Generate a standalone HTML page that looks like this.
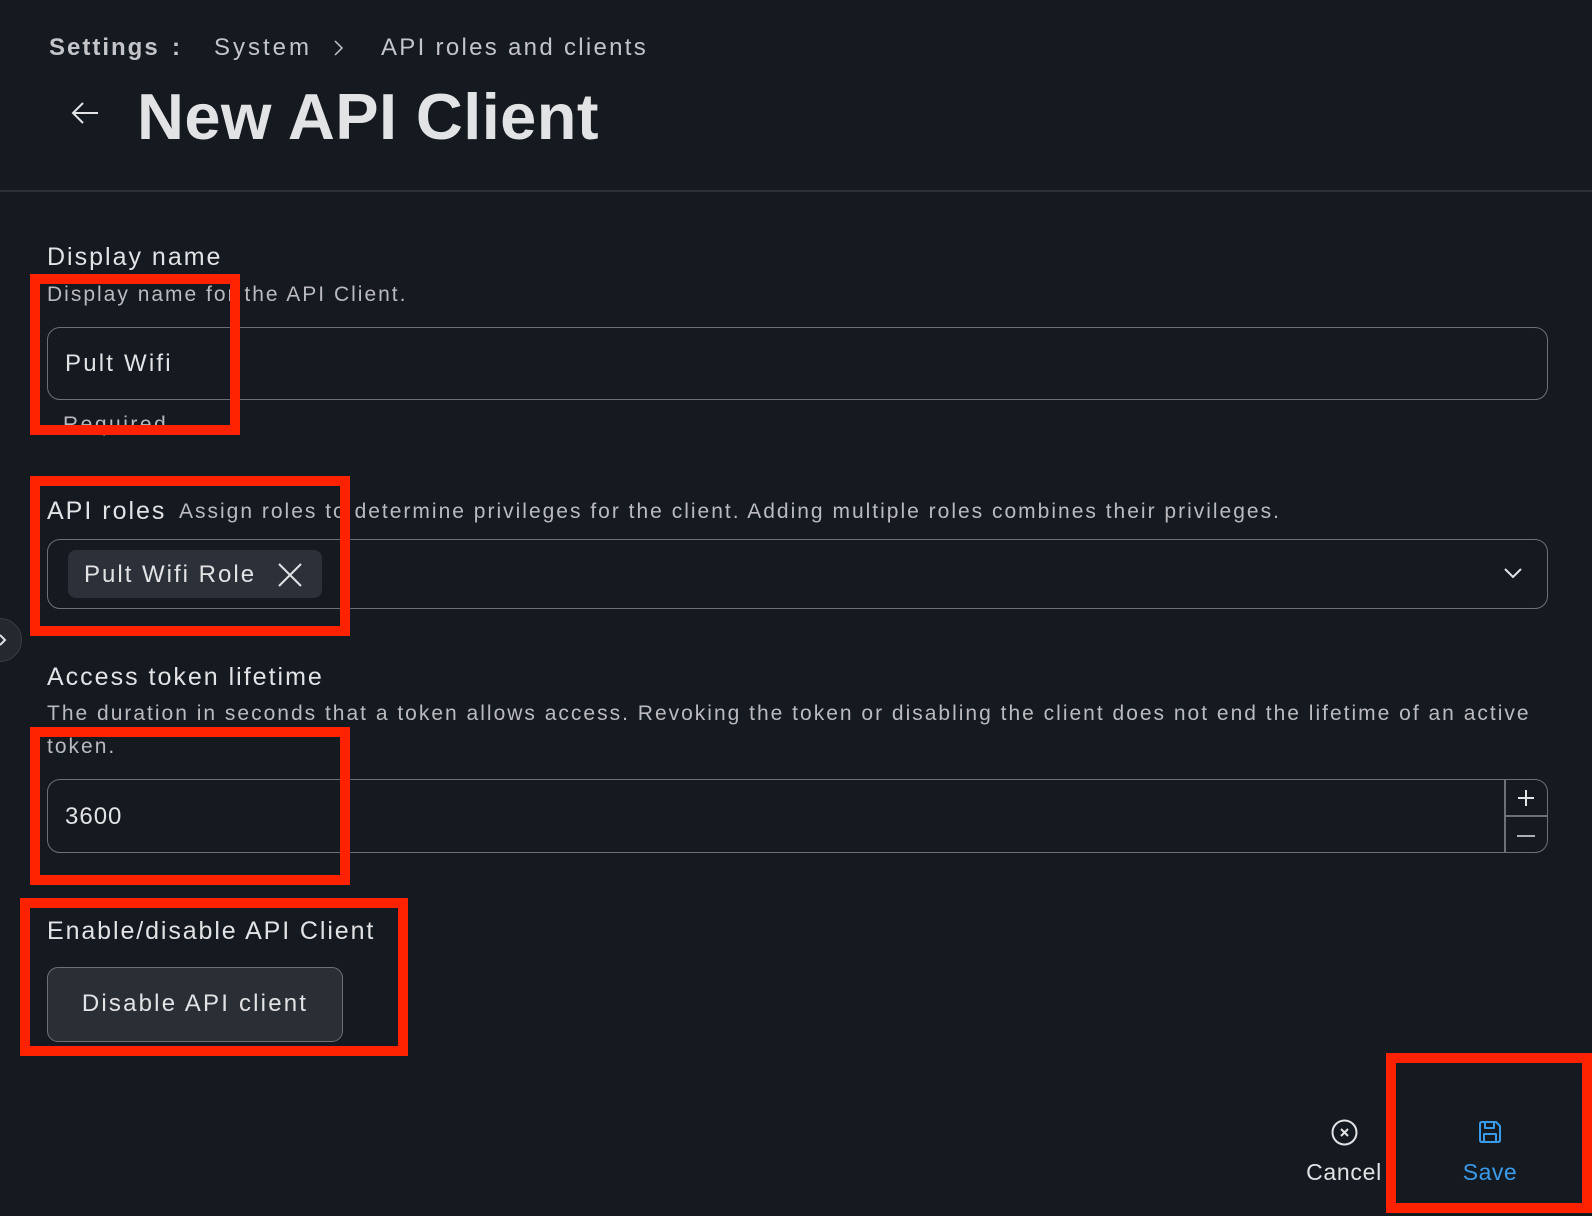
<!DOCTYPE html>
<html><head><meta charset="utf-8"><style>
*{margin:0;padding:0;box-sizing:border-box}
body{width:1592px;height:1216px;background:#151920;font-family:"Liberation Sans",sans-serif;color:#e2e3e5;position:relative;overflow:hidden}
.a{position:absolute;white-space:nowrap}
.lbl{font-size:25px;color:#e2e3e5;letter-spacing:2px}
.val{font-size:24px;color:#e2e3e5;letter-spacing:2.2px}
.desc{font-size:21px;color:#babbbf;letter-spacing:2px}
.bc{font-size:24px;color:#c4c5c9;letter-spacing:2.3px}
.inp{position:absolute;left:47px;width:1501px;border:1.5px solid #6d7075;border-radius:13px}
.red{position:absolute;border:10px solid #ff2200}
</style></head><body>
<div class="a bc" style="left:49px;top:34px;font-weight:bold;letter-spacing:2px">Settings</div>
<div class="a bc" style="left:172px;top:34px;font-weight:bold">:</div>
<div class="a bc" style="left:214px;top:34px;letter-spacing:3px">System</div>
<svg class="a" style="left:332px;top:38px" width="14" height="20"><path d="M3 3 L10 10 L3 17" stroke="#c4c5c9" stroke-width="1.5" fill="none"/></svg>
<div class="a bc" style="left:381px;top:34px">API roles and clients</div>
<svg class="a" style="left:70px;top:100px" width="30" height="26"><path d="M28 13 H3 M13 3 L3 13 L13 23" stroke="#e2e3e5" stroke-width="2" fill="none"/></svg>
<div class="a" style="left:137px;top:79px;font-size:65px;font-weight:bold;color:#e2e3e5;letter-spacing:0.4px">New API Client</div>
<div class="a" style="left:0;top:190px;width:1592px;height:2px;background:#2c3037"></div>

<div class="a lbl" style="left:47px;top:243px">Display name</div>
<div class="a desc" style="left:47px;top:283px">Display name for the API Client.</div>
<div class="inp" style="top:327px;height:73px"></div>
<div class="a val" style="left:65px;top:350px">Pult Wifi</div>
<div class="a desc" style="left:63px;top:413px;letter-spacing:2.5px">Required</div>

<div class="a lbl" style="left:47px;top:497px">API roles</div>
<div class="a desc" style="left:179px;top:500px">Assign roles to determine privileges for the client. Adding multiple roles combines their privileges.</div>
<div class="inp" style="top:539px;height:70px"></div>
<div class="a" style="left:68px;top:550px;width:254px;height:48px;background:#2c3038;border-radius:8px"></div>
<div class="a val" style="left:84px;top:561px;letter-spacing:2px">Pult Wifi Role</div>
<svg class="a" style="left:277px;top:562px" width="26" height="26"><path d="M2 2 L24 24 M24 2 L2 24" stroke="#e2e3e5" stroke-width="2"/></svg>
<svg class="a" style="left:1503px;top:566px" width="20" height="14"><path d="M2 3 L10 11 L18 3" stroke="#e2e3e5" stroke-width="2" fill="none"/></svg>

<div class="a" style="left:-22px;top:618px;width:44px;height:44px;border-radius:50%;background:#24282f;border:1.5px solid #3a3e45"></div>
<svg class="a" style="left:0;top:632px" width="8" height="16"><path d="M0 3 L5 8 L0 13" stroke="#e2e3e5" stroke-width="2" fill="none"/></svg>

<div class="a lbl" style="left:47px;top:663px">Access token lifetime</div>
<div class="a desc" style="left:47px;top:702px">The duration in seconds that a token allows access. Revoking the token or disabling the client does not end the lifetime of an active</div>
<div class="a desc" style="left:47px;top:735px">token.</div>
<div class="inp" style="top:779px;height:74px"></div>
<div class="a" style="left:1504px;top:780px;width:1.5px;height:72px;background:#6d7075"></div>
<div class="a" style="left:1505px;top:815px;width:42px;height:1.5px;background:#6d7075"></div>
<svg class="a" style="left:1516px;top:788px" width="20" height="20"><path d="M10 2 V18 M2 10 H18" stroke="#e2e3e5" stroke-width="2"/></svg>
<svg class="a" style="left:1516px;top:826px" width="20" height="20"><path d="M1 10 H19" stroke="#e2e3e5" stroke-width="1.5"/></svg>
<div class="a val" style="left:65px;top:803px;letter-spacing:1px">3600</div>

<div class="a lbl" style="left:47px;top:917px;letter-spacing:1.9px">Enable/disable API Client</div>
<div class="a" style="left:47px;top:967px;width:296px;height:75px;background:#2a2e35;border:1.5px solid #6d7075;border-radius:11px;font-size:24px;color:#e2e3e5;text-align:center;line-height:72px;letter-spacing:2.2px">Disable API client</div>

<svg class="a" style="left:1331px;top:1119px" width="27" height="27"><circle cx="13.5" cy="13.5" r="12" stroke="#e2e3e5" stroke-width="2" fill="none"/><path d="M10 10 L17 17 M17 10 L10 17" stroke="#e2e3e5" stroke-width="2"/></svg>
<div class="a" style="left:1294px;top:1159px;width:100px;text-align:center;font-size:23px;color:#e2e3e5;letter-spacing:0.7px">Cancel</div>
<svg class="a" style="left:1477px;top:1119px" width="26" height="26"><path d="M3 5 Q3 3 5 3 H19 L23 7 V21 Q23 23 21 23 H5 Q3 23 3 21 Z M8 3 V9 H17 V3 M7 23 V15 H19 V23" stroke="#3a9bea" stroke-width="2" fill="none" stroke-linejoin="round"/></svg>
<div class="a" style="left:1440px;top:1159px;width:100px;text-align:center;font-size:23px;color:#3a9bea;letter-spacing:0.5px">Save</div>

<div class="red" style="left:30px;top:274px;width:210px;height:161px"></div>
<div class="red" style="left:30px;top:476px;width:320px;height:160px"></div>
<div class="red" style="left:30px;top:727px;width:320px;height:158px"></div>
<div class="red" style="left:20px;top:898px;width:388px;height:158px"></div>
<div class="red" style="left:1386px;top:1053px;width:206px;height:160px"></div>
</body></html>
